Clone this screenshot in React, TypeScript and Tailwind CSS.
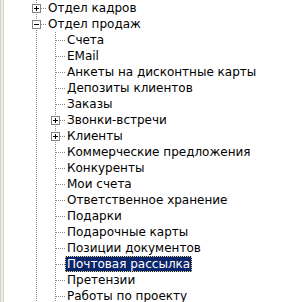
import React from "react";

type Node = { label: string; depth: 0 | 1; box?: "plus" | "minus"; selected?: boolean };

const rows: Node[] = [
  { label: "Отдел кадров", depth: 0, box: "plus" },
  { label: "Отдел продаж", depth: 0, box: "minus" },
  { label: "Счета", depth: 1 },
  { label: "EMail", depth: 1 },
  { label: "Анкеты на дисконтные карты", depth: 1 },
  { label: "Депозиты клиентов", depth: 1 },
  { label: "Заказы", depth: 1 },
  { label: "Звонки-встречи", depth: 1, box: "plus" },
  { label: "Клиенты", depth: 1, box: "plus" },
  { label: "Коммерческие предложения", depth: 1 },
  { label: "Конкуренты", depth: 1 },
  { label: "Мои счета", depth: 1 },
  { label: "Ответственное хранение", depth: 1 },
  { label: "Подарки", depth: 1 },
  { label: "Подарочные карты", depth: 1 },
  { label: "Позиции документов", depth: 1 },
  { label: "Почтовая рассылка", depth: 1, selected: true },
  { label: "Претензии", depth: 1 },
  { label: "Работы по проекту", depth: 1 },
];

// one 19x16 cell of tree lines
function Cell({ joint, box }: { joint: boolean; box?: "plus" | "minus" }) {
  return (
    <svg width="19" height="16" viewBox="0 0 19 16" className="block shrink-0" shapeRendering="crispEdges">
      <line x1="9.5" y1="0" x2="9.5" y2="16" stroke="#8a8a8a" strokeDasharray="1 1" />
      {joint && <line x1="10" y1="8.5" x2="19" y2="8.5" stroke="#8a8a8a" strokeDasharray="1 1" />}
      {box && (
        <>
          <rect x="5.5" y="4.5" width="8" height="8" fill="#fff" stroke="#848484" />
          <line x1="7" y1="8.5" x2="12" y2="8.5" stroke="#000" />
          {box === "plus" && <line x1="9.5" y1="6" x2="9.5" y2="11" stroke="#000" />}
        </>
      )}
    </svg>
  );
}

export default function App() {
  return (
    <div className="flex h-[302px] w-[284px] overflow-hidden bg-white font-['DejaVu_Sans',sans-serif] text-[12px] text-black">
      {/* left frame edge */}
      <div className="w-px shrink-0 bg-[#d4d0c8]" />
      <div className="w-[2px] shrink-0 bg-[#f0eee8]" />
      <div className="w-px shrink-0 bg-[#d4d0c8]" />
      <div className="flex flex-col pl-[23px]">
        {rows.map((r) => (
          <div key={r.label} className="flex h-4 items-center">
            {r.depth === 0 ? (
              <Cell joint box={r.box} />
            ) : (
              <>
                <Cell joint={false} />
                <Cell joint box={r.box} />
              </>
            )}
            <span
              className={
                r.selected
                  ? "h-4 whitespace-nowrap bg-[#0a246a] px-[1px] leading-[14px] text-white outline-1 outline-dotted outline-[#e8d890] -outline-offset-1 border border-transparent"
                  : "whitespace-nowrap px-[2px] leading-4"
              }
            >
              {r.label}
            </span>
          </div>
        ))}
      </div>
    </div>
  );
}
